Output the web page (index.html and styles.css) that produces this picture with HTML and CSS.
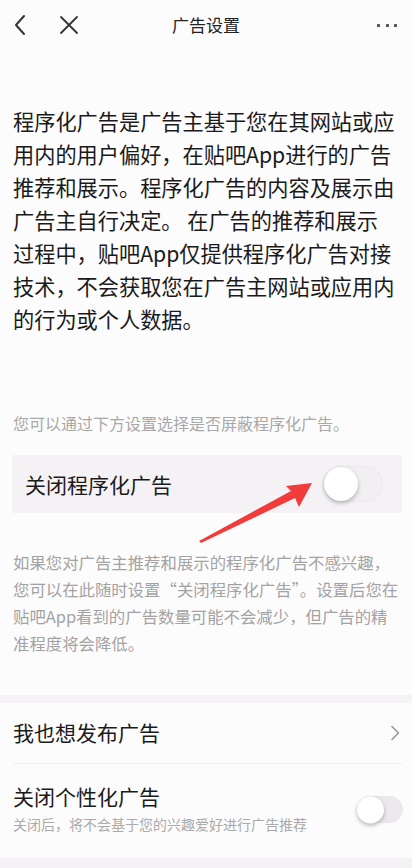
FILE: index.html
```html
<!DOCTYPE html>
<html lang="zh-CN">
<head>
<meta charset="utf-8">
<title>广告设置</title>
<link rel="stylesheet" href="styles.css">
</head>
<body>
<div class="page">
  <header class="topbar">
    <div class="nav-left">
      <svg class="icon-back" width="14" height="24" viewBox="0 0 14 24"><path d="M11 3 L3 12 L11 21" fill="none" stroke="#333" stroke-width="2" stroke-linecap="round" stroke-linejoin="round"/></svg>
      <svg class="icon-close" width="22" height="22" viewBox="0 0 22 22"><path d="M3 3 L19 19 M19 3 L3 19" fill="none" stroke="#333" stroke-width="1.8" stroke-linecap="round"/></svg>
    </div>
    <h1 class="title">广告设置</h1>
    <div class="more"><span></span><span></span><span></span></div>
  </header>

  <p class="intro">程序化广告是广告主基于您在其网站或应<br>用内的用户偏好，在贴吧App进行的广告<br>推荐和展示。程序化广告的内容及展示由<br>广告主自行决定。 在广告的推荐和展示<br>过程中，贴吧App仅提供程序化广告对接<br>技术，不会获取您在广告主网站或应用内<br>的行为或个人数据。</p>

  <p class="notice">您可以通过下方设置选择是否屏蔽程序化广告。</p>

  <div class="toggle-row">
    <span class="toggle-label">关闭程序化广告</span>
    <div class="switch switch-lg"><span class="knob"></span></div>
  </div>

  <p class="desc">如果您对广告主推荐和展示的程序化广告不感兴趣，<br>您可以在此随时设置“关闭程序化广告”。设置后您在<br>贴吧App看到的广告数量可能不会减少，但广告的精<br>准程度将会降低。</p>

  <div class="band"></div>

  <section class="list">
    <div class="list-row">
      <span class="row-title">我也想发布广告</span>
      <svg class="chev" width="10" height="16" viewBox="0 0 10 16"><path d="M2 1.5 L8.5 8 L2 14.5" fill="none" stroke="#999" stroke-width="1.6" stroke-linecap="round" stroke-linejoin="round"/></svg>
    </div>
    <div class="divider"></div>
    <div class="list-row list-row-tall">
      <div class="row-text">
        <span class="row-title">关闭个性化广告</span>
        <span class="row-sub">关闭后，将不会基于您的兴趣爱好进行广告推荐</span>
      </div>
      <div class="switch switch-sm"><span class="knob"></span></div>
    </div>
  </section>

  <div class="band band-bottom"></div>

  <svg class="arrow" width="412" height="868" viewBox="0 0 412 868"><polygon points="199,541 291,491 286,486 312,483 299,507 295,498 201,543" fill="#f23b3b"/></svg>
</div>
</body>
</html>
```

FILE: styles.css
```css
* { box-sizing: border-box; margin: 0; padding: 0; }
html, body { background: #fdfcfd; }
body {
  font-family: "Noto Sans CJK SC", "Noto Sans", sans-serif;
  color: #1c1c1c;
  width: 412px;
  height: 868px;
  overflow: hidden;
}
.page { position: relative; width: 412px; height: 868px; display: flex; flex-direction: column; }

.topbar {
  height: 52px;
  display: flex;
  align-items: center;
  position: relative;
  padding: 0 14px 0 13px;
}
.nav-left { display: flex; align-items: center; gap: 31px; }
.icon-back { display: block; }
.icon-close { display: block; }
.title {
  position: absolute;
  left: 0; right: 0;
  text-align: center;
  font-size: 17px;
  font-weight: 400;
  color: #222;
  line-height: 52px;
  pointer-events: none;
}
.more { margin-left: auto; display: flex; gap: 5.5px; padding-right: 1px; }
.more span { width: 3px; height: 3px; background: #555; border-radius: 0.5px; display: block; }

.intro {
  padding: 54px 10px 0 13px;
  font-size: 21.2px;
  line-height: 33px;
  color: #1a1a1a;
}
.notice {
  margin-top: 76px;
  padding-left: 13px;
  font-size: 16px;
  line-height: 24px;
  color: #a8a8a8;
}
.toggle-row {
  margin: 20px 10px 0 12px;
  height: 60px;
  background: #f4f2f5;
  display: flex;
  align-items: center;
  justify-content: space-between;
  padding: 0 19px 0 13px;
}
.toggle-label { font-size: 21px; color: #1a1a1a; }

.switch {
  position: relative;
  border-radius: 999px;
  background: #f1eff2;
  border: 1px solid #ebe9ec;
}
.switch .knob {
  position: absolute;
  left: 0; top: 50%;
  transform: translateY(-50%);
  border-radius: 50%;
  background: #fff;
  box-shadow: 0 2px 4px rgba(0,0,0,0.28);
}
.switch-lg { width: 60px; height: 36px; }
.switch-lg .knob { width: 34px; height: 34px; }
.switch-sm { width: 46px; height: 27px; background: #ebe9ec; border-color: #e8e6e9; }
.switch-sm .knob { width: 27px; height: 27px; left: -1px; }

.desc {
  margin-top: 36px;
  padding-left: 13px;
  font-size: 16.4px;
  line-height: 27px;
  color: #a3a3a3;
}
.band { margin-top: 38px; height: 9px; background: #f4f2f5; }
.band-bottom { margin-top: 0; height: 10px; }

.list { display: flex; flex-direction: column; }
.list-row {
  height: 60px;
  display: flex;
  align-items: center;
  justify-content: space-between;
  padding: 0 12px 2px 13px;
}
.row-title { font-size: 21px; color: #1a1a1a; line-height: 28px; }
.chev { display: block; margin-top: 2px; }
.divider { height: 1px; background: #f1eff2; margin: 0 10px 0 13px; }
.list-row-tall { height: 94px; align-items: flex-start; padding-top: 18px; padding-right: 9px; padding-bottom: 0; }
.row-text { display: flex; flex-direction: column; }
.row-sub { font-size: 14px; color: #aaa; line-height: 20px; margin-top: 4px; }
.list-row-tall .switch { margin-top: 14px; }

.arrow { position: absolute; left: 0; top: 0; pointer-events: none; }
```
